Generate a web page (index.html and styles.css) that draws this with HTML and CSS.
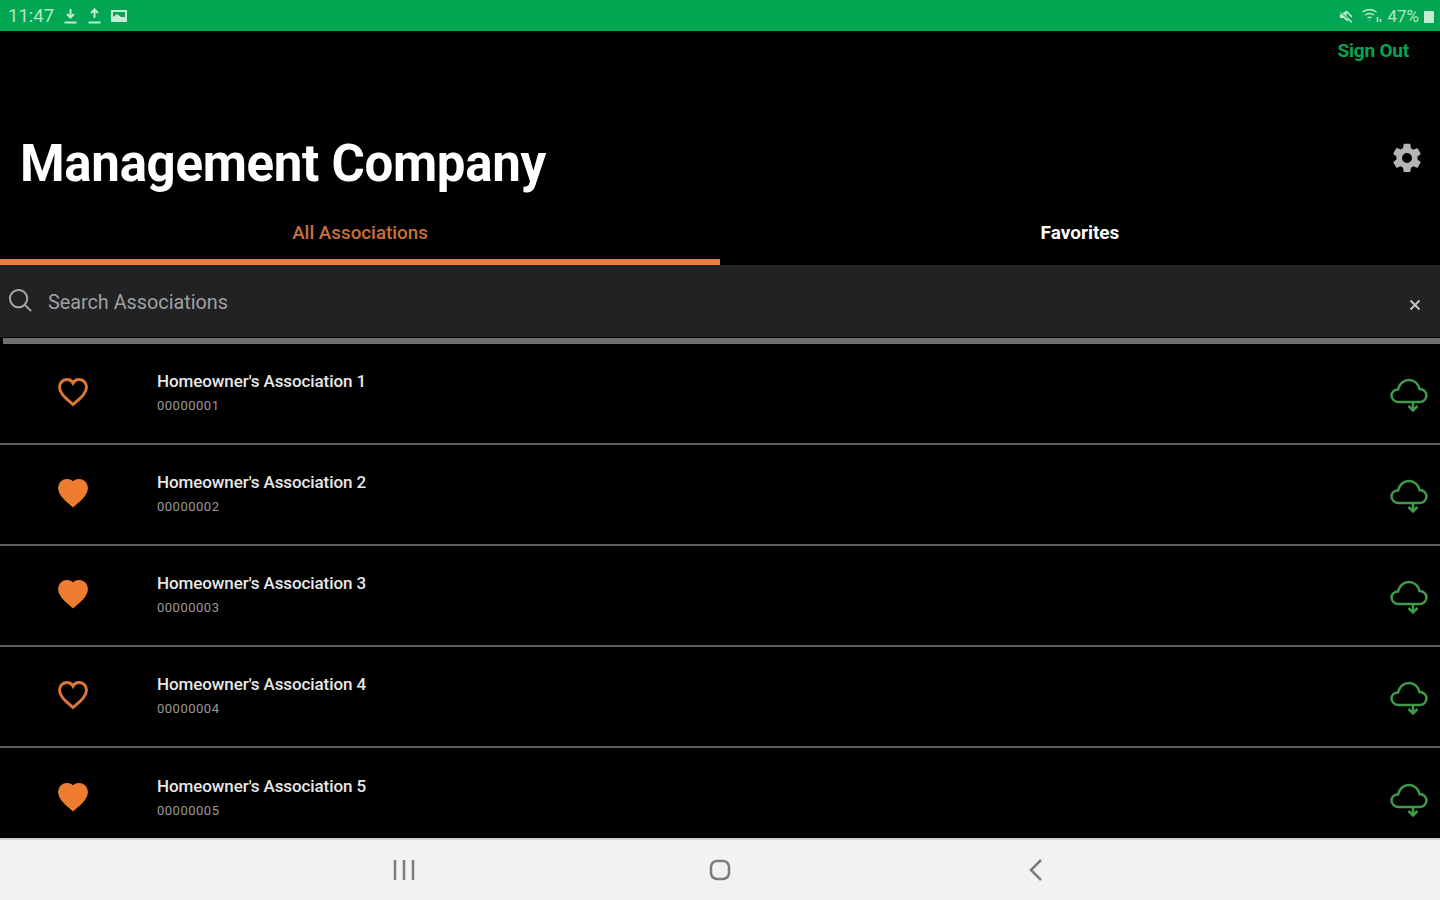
FILE: index.html
```html
<!DOCTYPE html>
<html lang="en">
<head>
    <meta charset="UTF-8">
    <title>Management Company</title>
    <link rel="stylesheet" href="styles.css">
</head>
<body>
    <svg class="defs" width="0" height="0">
        <symbol id="heart" viewBox="0 0 32 30">
            <path d="M16 27.500 C10 22 2.500 17 2.500 10 C2.500 5.500 6 2.500 10 2.500 C12.500 2.500 14.800 3.800 16 6 C17.200 3.800 19.500 2.500 22 2.500 C26 2.500 29.500 5.500 29.500 10 C29.500 17 22 22 16 27.500 Z"/>
        </symbol>
        <symbol id="cloud" viewBox="0 0 38 36">
            <path d="M9 25 C4.500 25 1.500 22 1.500 18.500 C1.500 15 4.500 12.500 8 12.500 C9 7 13.500 3 19 3 C24.500 3 28.500 7 29.500 12 C33.500 12 36.500 15 36.500 18.500 C36.500 22 33.500 25 29.500 25 Z"/>
            <path d="M23 25 V33 M18.500 29 L23 33.500 L27.500 29"/>
        </symbol>
    </svg>

    <header class="status-bar">
        <div class="status-left">
            <span>11:47</span>
            <svg class="status-icon" viewBox="0 0 14 16"><path d="M7 1 V9 M3.500 6 L7 9.500 L10.500 6 M1 14.500 H13"/></svg>
            <svg class="status-icon" viewBox="0 0 14 16"><path d="M7 10 V2 M3.500 5 L7 1.500 L10.500 5 M1 14.500 H13"/></svg>
            <svg class="status-icon status-image" viewBox="0 0 16 14"><path class="solid" d="M0 1 H16 V13 H0 Z M2 3 V8 L6 5 L10 8 H14 V3 Z"/></svg>
        </div>
        <div class="status-right">
            <svg class="status-icon mute" viewBox="0 0 16 16"><path class="solid" d="M1 5 H4 L8 2 L14 8 V10 L8 4.500 V8 L14 14 L13 15.500 L1 3.500 Z M1 6 H5 L9 10 V14 L5 10 H1 Z"/></svg>
            <svg class="status-icon wifi" viewBox="0 0 20 16"><path d="M1 4 C5 1 11 1 15 4 M3.500 7 C6.500 5 9.500 5 12.500 7 M6 10 C7.500 9 8.500 9 10 10 M8 12.500 V13 M16 9 V14 M19 11 V14"/></svg>
            <span class="percent">47%</span>
            <span class="battery"></span>
        </div>
    </header>

    <main class="app">
        <div class="top">
            <a class="sign-out" href="#">Sign Out</a>
            <div class="title-row">
                <h1>Management Company</h1>
                <svg class="gear" viewBox="0 0 24 24"><path fill-rule="evenodd" d="M19.400 13 a7.500 7.500 0 0 0 0-2 l2.100-1.600 a.5 .5 0 0 0 .1-.6 l-2-3.500 a.5 .5 0 0 0-.6-.2 l-2.500 1 a7.500 7.500 0 0 0-1.700-1 l-.4-2.600 A.5 .5 0 0 0 13.900 2 h-3.800 a.5 .5 0 0 0-.5 .4 l-.4 2.600 a7.500 7.500 0 0 0-1.700 1 l-2.500-1 a.5 .5 0 0 0-.6 .2 l-2 3.500 a.5 .5 0 0 0 .1 .6 L4.600 11 a7.500 7.500 0 0 0 0 2 l-2.100 1.600 a.5 .5 0 0 0-.1 .6 l2 3.500 a.5 .5 0 0 0 .6 .2 l2.500-1 a7.500 7.500 0 0 0 1.700 1 l.4 2.600 a.5 .5 0 0 0 .5 .4 h3.800 a.5 .5 0 0 0 .5-.4 l.4-2.600 a7.500 7.500 0 0 0 1.700-1 l2.500 1 a.5 .5 0 0 0 .6-.2 l2-3.500 a.5 .5 0 0 0-.1-.6 Z M12 15.500 a3.500 3.500 0 1 1 0-7 a3.500 3.500 0 0 1 0 7 Z"/></svg>
            </div>
        </div>

        <nav class="tabs">
            <a class="tab active" href="#">All Associations</a>
            <a class="tab" href="#">Favorites</a>
        </nav>

        <div class="search">
            <svg class="search-icon" viewBox="0 0 26 26"><circle cx="11" cy="11" r="9"/><path d="M17.500 17.500 L24 24"/></svg>
            <span class="search-text">Search Associations</span>
            <svg class="clear-icon" viewBox="0 0 12 12"><path d="M1.500 1.500 L10.500 10.500 M10.500 1.500 L1.500 10.500"/></svg>
        </div>
        <div class="search-line"></div>

        <ul class="list">
            <li class="row">
                <svg class="heart"><use href="#heart"/></svg>
                <div class="info"><p class="name">Homeowner's Association 1</p><p class="code">00000001</p></div>
                <svg class="cloud"><use href="#cloud"/></svg>
            </li>
            <li class="row">
                <svg class="heart filled"><use href="#heart"/></svg>
                <div class="info"><p class="name">Homeowner's Association 2</p><p class="code">00000002</p></div>
                <svg class="cloud"><use href="#cloud"/></svg>
            </li>
            <li class="row">
                <svg class="heart filled"><use href="#heart"/></svg>
                <div class="info"><p class="name">Homeowner's Association 3</p><p class="code">00000003</p></div>
                <svg class="cloud"><use href="#cloud"/></svg>
            </li>
            <li class="row">
                <svg class="heart"><use href="#heart"/></svg>
                <div class="info"><p class="name">Homeowner's Association 4</p><p class="code">00000004</p></div>
                <svg class="cloud"><use href="#cloud"/></svg>
            </li>
            <li class="row">
                <svg class="heart filled"><use href="#heart"/></svg>
                <div class="info"><p class="name">Homeowner's Association 5</p><p class="code">00000005</p></div>
                <svg class="cloud"><use href="#cloud"/></svg>
            </li>
        </ul>
    </main>

    <footer class="nav-bar">
        <svg class="nav-icon" viewBox="0 0 24 24"><path d="M3 2 V22 M12 2 V22 M21 2 V22"/></svg>
        <svg class="nav-icon" viewBox="0 0 24 24"><rect x="3" y="3" width="18" height="18" rx="6"/></svg>
        <svg class="nav-icon" viewBox="0 0 24 24"><path d="M17 2 L7 12 L17 22"/></svg>
    </footer>
</body>
</html>
```

FILE: styles.css
```css
* {
    box-sizing: border-box;
}
html, body {
    height: 100%;
}
body {
    margin: 0;
    height: 900px;
    overflow: hidden;
    display: flex;
    flex-direction: column;
    background-color: #000;
    color: #fff;
    font-family: Roboto, sans-serif;
}
a {
    text-decoration: none;
}
.defs {
    position: absolute;
}

/* status bar */
.status-bar {
    height: 31px;
    flex: none;
    display: flex;
    align-items: center;
    justify-content: space-between;
    padding: 0 6px 0 8px;
    background-color: #00a651;
    color: #b5e6c8;
    font-size: 18.500px;
}
.status-left, .status-right {
    display: flex;
    align-items: center;
    gap: 9px;
}
.status-right {
    gap: 5px;
}
.status-icon {
    width: 15px;
    height: 16px;
    fill: none;
    stroke: #c4ecd3;
    stroke-width: 2;
}
.status-icon .solid {
    fill: #c4ecd3;
    stroke: none;
    fill-rule: evenodd;
}
.status-image {
    width: 16px;
}
.wifi {
    width: 21px;
    margin-left: 2px;
    stroke-width: 1.500;
}
.percent {
    font-size: 17px;
}
.battery {
    width: 10px;
    height: 12px;
    margin-top: 3px;
    background-color: #c4ecd3;
    border-radius: 1px;
}

/* header */
.app {
    flex: 1;
    display: flex;
    flex-direction: column;
    min-height: 0;
}
.top {
    height: 169px;
    flex: none;
    display: flex;
    flex-direction: column;
}
.sign-out {
    align-self: flex-end;
    margin: 9px 31px 0 0;
    color: #00a651;
    font-size: 19px;
    font-weight: 700;
    line-height: 22px;
    letter-spacing: -0.2px;
}
.title-row {
    display: flex;
    align-items: center;
    justify-content: space-between;
    margin-top: 71px;
    padding: 0 16px 0 20px;
}
h1 {
    margin: 0;
    font-size: 51px;
    font-weight: 700;
    line-height: 62px;
    letter-spacing: -0.3px;
}
.gear {
    width: 34px;
    height: 34px;
    margin-top: -13px;
    fill: #b4b4b4;
}

/* tabs */
.tabs {
    height: 65px;
    flex: none;
    display: flex;
}
.tab {
    flex: 1;
    padding-top: 22px;
    text-align: center;
    color: #fff;
    font-size: 19px;
    font-weight: 700;
    line-height: 22px;
}
.tab.active {
    border-bottom: 6px solid #e9803a;
    color: #c9703a;
    font-size: 18.800px;
    font-weight: 500;
}

/* search */
.search {
    height: 72px;
    flex: none;
    display: flex;
    align-items: center;
    padding: 0 19px 0 8px;
    background-color: #212224;
}
.search-icon {
    width: 25px;
    height: 25px;
    margin-top: -2px;
    fill: none;
    stroke: #a8a8a8;
    stroke-width: 2;
}
.search-text {
    flex: 1;
    margin: 3px 0 0 15px;
    color: #a0a0a0;
    font-size: 19.800px;
}
.clear-icon {
    width: 12px;
    height: 12px;
    margin-top: 8px;
    fill: none;
    stroke: #c4c4c4;
    stroke-width: 2;
}
.search-line {
    height: 6px;
    flex: none;
    margin: 1px 0 0 3px;
    background-color: #6f6f6f;
}

/* list */
.list {
    list-style: none;
    margin: 0;
    padding: 0;
    flex: 1;
    overflow: hidden;
}
.row {
    height: 101px;
    display: flex;
    align-items: center;
    border-bottom: 2px solid #5c5c5c;
}
.row:last-child {
    border-bottom: none;
}
.heart {
    width: 32px;
    height: 30px;
    margin: -3px 0 0 57px;
    fill: none;
    stroke: #d9773a;
    stroke-width: 3;
}
.heart.filled {
    fill: #ef7d30;
    stroke: #ef7d30;
}
.info {
    flex: 1;
    margin: -3px 0 0 68px;
}
.name {
    margin: 0;
    color: #e8e8e8;
    font-size: 17px;
    font-weight: 500;
    line-height: 22px;
    letter-spacing: -0.1px;
}
.code {
    margin: 6px 0 0;
    color: #9a9a9a;
    font-size: 13px;
    line-height: 16px;
    letter-spacing: 0.5px;
}
.cloud {
    width: 38px;
    height: 36px;
    margin: 2px 12px 0 0;
    fill: none;
    stroke: #3f9a4b;
    stroke-width: 2.500;
}

/* android nav */
.nav-bar {
    height: 62px;
    flex: none;
    display: flex;
    align-items: center;
    justify-content: center;
    gap: 292px;
    background-color: #f2f2f2;
    border-top: 2px solid #cfcfcf;
}
.nav-icon {
    width: 24px;
    height: 24px;
    fill: none;
    stroke: #7d7d7d;
    stroke-width: 2.500;
}
```
